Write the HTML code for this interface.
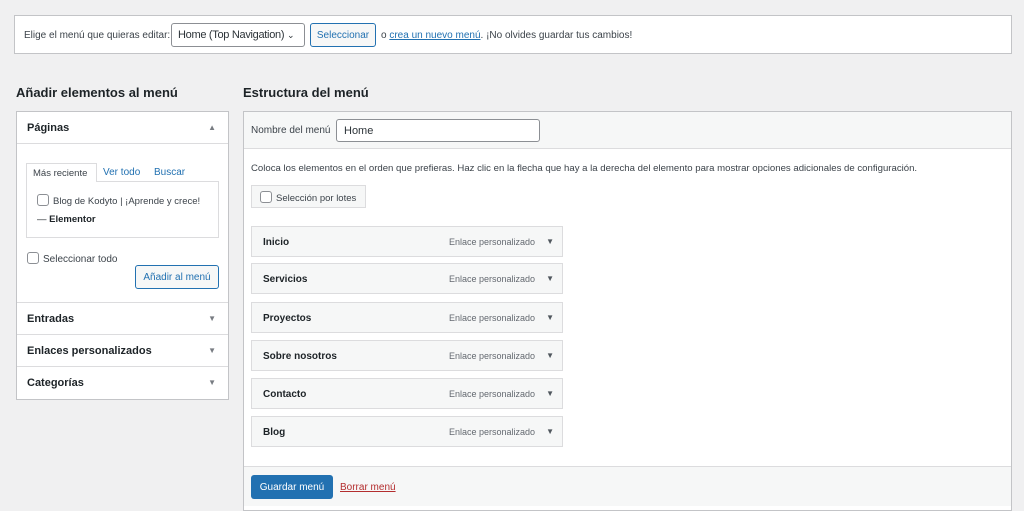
<!DOCTYPE html><html><head><meta charset="utf-8"><style>
*{box-sizing:border-box;margin:0;padding:0}
body{width:1024px;height:506px;background:#f0f0f1;font-family:"Liberation Sans",sans-serif;font-size:10px;color:#3c434a;position:relative;overflow:hidden}
.a{position:absolute;white-space:nowrap}
.box{background:#fff;border:1px solid #c3c4c7}
.btn{border:1px solid #2271b1;color:#2271b1;background:#f6f7f7;border-radius:3px;text-align:center}
.cb{display:inline-block;width:12px;height:12px;border:1px solid #8c8f94;border-radius:3px;background:#fff;vertical-align:-2px;margin-right:4px}
h2{position:absolute;font-size:13px;font-weight:bold;color:#1d2327;white-space:nowrap}
.row{position:absolute;left:0;width:211px;height:32px;border-top:1px solid #dcdcde;font-weight:bold;font-size:11px;color:#1d2327;padding:10px 10px;white-space:nowrap}
.row span{position:absolute;right:12px;top:11px;font-size:8px;color:#787c82}
.it{position:absolute;left:251px;width:312px;height:31px;background:#f6f7f7;border:1px solid #dcdcde;font-weight:bold;font-size:10px;color:#1d2327;padding:10px 11px;white-space:nowrap}
.it i{position:absolute;right:27px;top:10px;font-style:normal;font-weight:normal;font-size:9px;color:#646970}
.it b{position:absolute;right:8px;top:10px;font-size:8px;color:#50575e}
</style></head><body>
<div class="a box" style="left:14px;top:15px;width:998px;height:39px"></div>
<div class="a" style="left:24px;top:30px">Elige el menú que quieras editar:</div>
<div class="a" style="left:171px;top:23px;width:134px;height:24px;border:1px solid #8c8f94;border-radius:3px;background:#fff;font-size:11px;color:#2c3338;padding:5px 6px;letter-spacing:-0.3px">Home (Top Navigation) <span style="font-size:9px">&#8964;</span></div>
<div class="a btn" style="left:310px;top:23px;width:66px;height:24px;padding-top:6px">Seleccionar</div>
<div class="a" style="left:381px;top:30px">o <u style="color:#2271b1">crea un nuevo menú</u>. ¡No olvides guardar tus cambios!</div>

<h2 style="left:16px;top:85px">Añadir elementos al menú</h2>
<h2 style="left:243px;top:85px">Estructura del menú</h2>

<div class="a box" style="left:16px;top:111px;width:213px;height:289px">
 <div class="a" style="left:10px;top:10px;font-weight:bold;font-size:11px;color:#1d2327">Páginas</div>
 <div class="a" style="right:12px;top:11px;font-size:8px;color:#787c82">▲</div>
 <div class="a" style="left:0;top:31px;width:211px;border-top:1px solid #dcdcde"></div>
 <div class="a" style="left:9px;top:51px;width:71px;height:19px;border:1px solid #dcdcde;border-bottom:0;background:#fff;padding:4px 6px;color:#3c434a;z-index:2;font-size:9.5px">Más reciente</div>
 <div class="a" style="left:86px;top:55px;color:#2271b1">Ver todo</div>
 <div class="a" style="left:137px;top:55px;color:#2271b1">Buscar</div>
 <div class="a" style="left:9px;top:69px;width:193px;height:57px;border:1px solid #dcdcde;padding:11px 10px;line-height:18px;font-size:9.5px"><span class="cb"></span>Blog de Kodyto | ¡Aprende y crece!<br><span style="color:#1d2327">— <b>Elementor</b></span></div>
 <div class="a" style="left:10px;top:140px"><span class="cb"></span>Seleccionar todo</div>
 <div class="a btn" style="left:118px;top:153px;width:84px;height:24px;padding-top:6px">Añadir al menú</div>
 <div class="row" style="top:190px">Entradas<span>▼</span></div>
 <div class="row" style="top:222px">Enlaces personalizados<span>▼</span></div>
 <div class="row" style="top:254px">Categorías<span>▼</span></div>
</div>

<div class="a box" style="left:243px;top:111px;width:769px;height:400px"></div>
<div class="a" style="left:244px;top:112px;width:767px;height:37px;background:#f6f7f7;border-bottom:1px solid #dcdcde"></div>
<div class="a" style="left:251px;top:125px">Nombre del menú</div>
<div class="a" style="left:336px;top:119px;width:204px;height:23px;border:1px solid #8c8f94;border-radius:3px;background:#fff;font-size:11px;color:#2c3338;padding:5px 7px">Home</div>
<div class="a" style="left:251px;top:163px;font-size:9.6px">Coloca los elementos en el orden que prefieras. Haz clic en la flecha que hay a la derecha del elemento para mostrar opciones adicionales de configuración.</div>
<div class="a" style="left:251px;top:185px;width:115px;height:23px;background:#f6f7f7;border:1px solid #dcdcde;padding:5px 8px;font-size:9.5px"><span class="cb"></span>Selección por lotes</div>
<div class="it" style="top:226px">Inicio<i>Enlace personalizado</i><b>▼</b></div>
<div class="it" style="top:263px">Servicios<i>Enlace personalizado</i><b>▼</b></div>
<div class="it" style="top:302px">Proyectos<i>Enlace personalizado</i><b>▼</b></div>
<div class="it" style="top:340px">Sobre nosotros<i>Enlace personalizado</i><b>▼</b></div>
<div class="it" style="top:378px">Contacto<i>Enlace personalizado</i><b>▼</b></div>
<div class="it" style="top:416px">Blog<i>Enlace personalizado</i><b>▼</b></div>
<div class="a" style="left:244px;top:466px;width:767px;height:40px;background:#f6f7f7;border-top:1px solid #dcdcde"></div>
<div class="a" style="left:251px;top:475px;width:82px;height:24px;background:#2271b1;border-radius:3px;color:#fff;text-align:center;padding-top:7px">Guardar menú</div>
<div class="a" style="left:340px;top:482px;color:#b32d2e;text-decoration:underline">Borrar menú</div>
</body></html>
